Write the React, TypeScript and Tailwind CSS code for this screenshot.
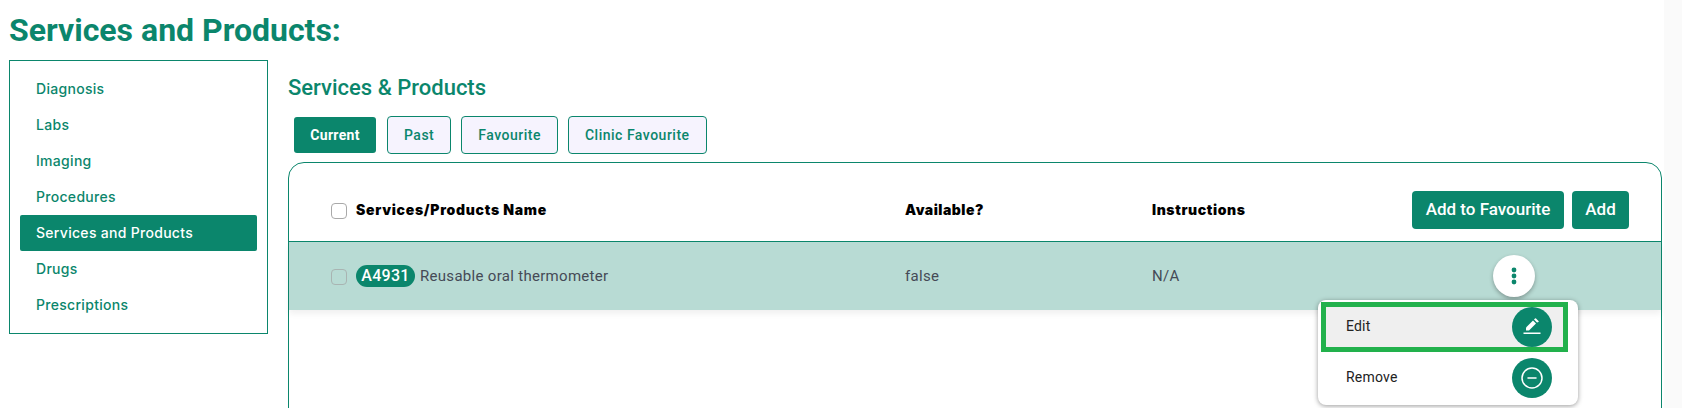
import React from 'react';
import { CircleMinus } from 'lucide-react';

const navItems = ['Diagnosis', 'Labs', 'Imaging', 'Procedures', 'Services and Products', 'Drugs', 'Prescriptions'];
const tabs = ['Past', 'Favourite', 'Clinic Favourite'];

const App = () => {
  return (
    <div className="flex w-[1682px] h-[408px] overflow-hidden bg-white font-['Roboto',sans-serif]">
      <div className="w-[1664px] shrink-0">
        <h1 className="pl-[9px] pt-[11px] h-[60px] text-[32px] leading-[38px] font-bold text-[#0b866c]">Services and Products:</h1>

        <div className="flex items-start pl-[9px]">
          {/* Side menu */}
          <nav className="w-[259px] h-[274px] shrink-0 border border-[#0b866c] px-[10px] pt-[10px]">
            {navItems.map(item => (
              <div
                key={item}
                className={
                  item === 'Services and Products'
                    ? "h-[36px] pl-[16px] pb-[1px] flex items-center rounded-[2px] bg-[#0b866c] text-white text-[14px] tracking-[0.3px] font-['Inter',sans-serif] font-medium"
                    : "h-[36px] pl-[16px] pb-[1px] flex items-center text-[#0b866c] text-[14px] tracking-[0.3px] font-['Inter',sans-serif] font-medium"
                }
              >
                {item}
              </div>
            ))}
          </nav>

          {/* Main */}
          <div className="ml-[20px] w-[1374px] shrink-0">
            <h2 className="h-[56px] pt-[15px] text-[22px] leading-[26px] font-medium text-[#0b866c]">Services &amp; Products</h2>

            <div className="flex items-center h-[38px] pl-[6px] gap-[10px]">
              <button className="w-[82px] h-[36px] mr-px rounded-[3px] bg-[#0b866c] text-white text-[14px] font-bold tracking-[0.3px]">Current</button>
              {tabs.map(tab => (
                <button key={tab} className="h-[38px] px-[16px] rounded-[4px] border border-[#0b866c] bg-[#f6f3fe] text-[#0b866c] text-[14px] font-medium tracking-[0.5px]">
                  {tab}
                </button>
              ))}
            </div>

            {/* Table card */}
            <div className="relative mt-[8px] h-[300px] rounded-tl-[16px] rounded-tr-[16px] border border-[#0b866c]">
              <div className="grid grid-cols-[574px_247px_1fr] items-center h-[79px] pt-[15px] pl-[42px] border-b border-[#0b866c]">
                <div className="flex items-center gap-[9px]">
                  <span className="w-[16px] h-[16px] mt-[2px] rounded-[4px] border border-[#a9a9a9] bg-white" />
                  <span className="text-[14px] font-['Inter',sans-serif] font-black text-black tracking-[0.7px]">Services/Products Name</span>
                </div>
                <span className="text-[14px] font-['Inter',sans-serif] font-black text-black tracking-[0.5px]">Available?</span>
                <div className="flex items-center justify-between pr-[32px]">
                  <span className="text-[14px] font-['Inter',sans-serif] font-black text-black tracking-[0.6px]">Instructions</span>
                  <div className="flex gap-[8px]">
                    <button className="w-[152px] h-[38px] rounded-[4px] bg-[#0b866c] text-white text-[17px] font-medium">Add to Favourite</button>
                    <button className="w-[57px] h-[38px] rounded-[4px] bg-[#0b866c] text-white text-[17px] font-medium">Add</button>
                  </div>
                </div>
              </div>

              <div className="grid grid-cols-[574px_247px_1fr] items-center h-[68px] pl-[42px] bg-[#b8dbd4] shadow-[0_4px_6px_rgba(0,0,0,0.06)] text-[15px] tracking-[0.3px] text-[#454a56]">
                <div className="flex items-center">
                  <span className="w-[16px] h-[16px] mt-[2px] mr-[9px] rounded-[4px] border border-[#a9b4b2] bg-[#b8dbd4]" />
                  <span className="h-[22px] w-[59px] mr-[5px] rounded-full bg-[#0b866c] text-white text-[16px] font-medium leading-[22px] text-center">A4931</span>
                  <span>Reusable oral thermometer</span>
                </div>
                <span>false</span>
                <span>N/A</span>
              </div>

              {/* Row actions */}
              <button className="absolute left-[1204px] top-[92px] w-[42px] h-[42px] rounded-full bg-white shadow-[0_2px_4px_rgba(0,0,0,0.3)] flex items-center justify-center">
                <svg width="6" height="18" viewBox="0 0 6 18" fill="#0b866c">
                  <circle cx="3" cy="3" r="2.4" />
                  <circle cx="3" cy="9" r="2.4" />
                  <circle cx="3" cy="15" r="2.4" />
                </svg>
              </button>

              <div className="absolute left-[1029px] top-[137px] w-[260px] h-[105px] rounded-[8px] bg-white shadow-[0_1px_5px_rgba(0,0,0,0.4)]">
                <div className="ml-[3px] mt-[2px] w-[247px] h-[50px] border-[5px] border-[#22b14c] bg-[#efefef] flex items-center justify-between pl-[20px] pr-[11px] text-[14px] tracking-[0.2px] text-[#222]">
                  <span className="-mt-[2px]">Edit</span>
                  <span className="w-[40px] h-[40px] rounded-full bg-[#0b866c] flex items-center justify-center">
                    <svg width="20" height="20" viewBox="0 0 20 20" fill="white">
                      <path d="M4 13.5V10.5L11 3.5 14 6.5 7 13.5z" />
                      <path d="M12 2.5 13 1.5a.7.7 0 0 1 1 0L16.5 4a.7.7 0 0 1 0 1L15 5.5z" />
                      <rect x="1.5" y="15.5" width="17" height="1.5" />
                    </svg>
                  </span>
                </div>
                <div className="h-[52px] flex items-center justify-between pl-[28px] pr-[26px] text-[14px] tracking-[0.2px] text-[#222]">
                  <span className="-mt-[2px]">Remove</span>
                  <span className="w-[40px] h-[40px] rounded-full bg-[#0b866c] flex items-center justify-center">
                    <CircleMinus size={24} strokeWidth={1.5} color="white" />
                  </span>
                </div>
              </div>
            </div>
          </div>
        </div>
      </div>
      <div className="flex-1 bg-[#fafafa]" />
    </div>
  );
};

export default App;
